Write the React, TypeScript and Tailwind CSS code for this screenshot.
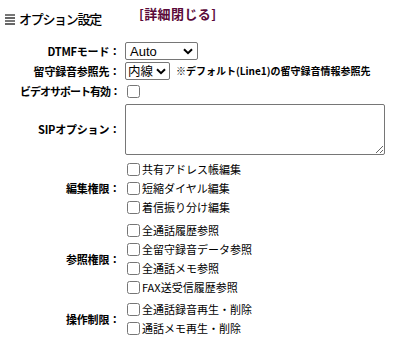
import React from "react";

function Chevron() {
  return (
    <svg width="10" height="7" viewBox="0 0 10 7" className="shrink-0">
      <polyline points="1,1.2 5,5.2 9,1.2" fill="none" stroke="#000" strokeWidth="2" />
    </svg>
  );
}

function Check({ label }: { label: string }) {
  return (
    <label className="flex items-center h-[19px]">
      <input type="checkbox" className="m-0 w-[13px] h-[13px] ml-[3px] shrink-0" />
      <span className="ml-[2px] text-[11px] leading-none">{label}</span>
    </label>
  );
}

function Row({
  label,
  h,
  children,
  top = 0,
  tight = false,
}: {
  label: string;
  h: string;
  children: React.ReactNode;
  top?: number;
  tight?: boolean;
}) {
  return (
    <div className={`flex items-center ${h}`} style={top ? { marginTop: top } : undefined}>
      <div
        className={`w-[120px] shrink-0 text-right text-[11px] font-bold leading-none ${
          tight ? "tracking-[-1px]" : "tracking-[-0.2px]"
        }`}
      >
        {label}
      </div>
      <div className="pl-[4px] flex flex-col">{children}</div>
    </div>
  );
}

export default function App() {
  return (
    <div className="w-[398px] h-[338px] overflow-hidden bg-white text-black font-['Noto_Sans_CJK_JP',sans-serif]">
      <div className="flex items-start h-[41px]">
        <div className="flex items-center mt-[12px] ml-[5px]">
          <div className="flex flex-col gap-[1px] w-[10px] mt-[1px]">
            <div className="h-[2px] bg-[#777777]" />
            <div className="h-[2px] bg-[#666666]" />
            <div className="h-[2px] bg-[#777777]" />
            <div className="h-[2px] bg-[#666666]" />
          </div>
          <span className="ml-[4px] text-[13px] leading-none font-medium tracking-[-1.3px]">オプション設定</span>
        </div>
        <a className="ml-[38px] mt-[7px] text-[13px] font-bold leading-none text-[#5a0a3a] tracking-[0.4px]">[詳細閉じる]</a>
      </div>

      <Row label="DTMFモード：" h="h-[20px]">
        <div className="flex items-center justify-between w-[73px] h-[18px] ml-[1px] border border-[#767676] rounded-[2px] pl-[4px] pr-[4px] bg-white">
          <span className="text-[13px] leading-none font-['Liberation_Sans',sans-serif]">Auto</span>
          <Chevron />
        </div>
      </Row>
      <Row label="留守録音参照先：" h="h-[20px]">
        <div className="flex items-center">
          <div className="flex items-center justify-between w-[45px] h-[18px] ml-[1px] border border-[#767676] rounded-[2px] pl-[2px] pr-[3px] bg-white">
            <span className="text-[12.5px] leading-none">内線</span>
            <Chevron />
          </div>
          <span className="ml-[6px] text-[10px] font-bold leading-none">※デフォルト(Line1)の留守録音情報参照先</span>
        </div>
      </Row>
      <Row label="ビデオサポート有効：" h="h-[21px]" tight>
        <input type="checkbox" className="m-0 w-[13px] h-[13px] ml-[3px]" />
      </Row>
      <Row label="SIPオプション：" h="h-[55px]">
        <textarea className="block w-[260px] h-[51px] ml-[1px] border border-[#767676] rounded-[2px] bg-white" />
      </Row>
      <Row label="編集権限：" h="h-[57px]" top={3}>
        <Check label="共有アドレス帳編集" />
        <Check label="短縮ダイヤル編集" />
        <Check label="着信振り分け編集" />
      </Row>
      <Row label="参照権限：" h="h-[76px]" top={4}>
        <Check label="全通話履歴参照" />
        <Check label="全留守録音データ参照" />
        <Check label="全通話メモ参照" />
        <Check label="FAX送受信履歴参照" />
      </Row>
      <Row label="操作制限：" h="h-[38px]" top={3}>
        <Check label="全通話録音再生・削除" />
        <Check label="通話メモ再生・削除" />
      </Row>
    </div>
  );
}
